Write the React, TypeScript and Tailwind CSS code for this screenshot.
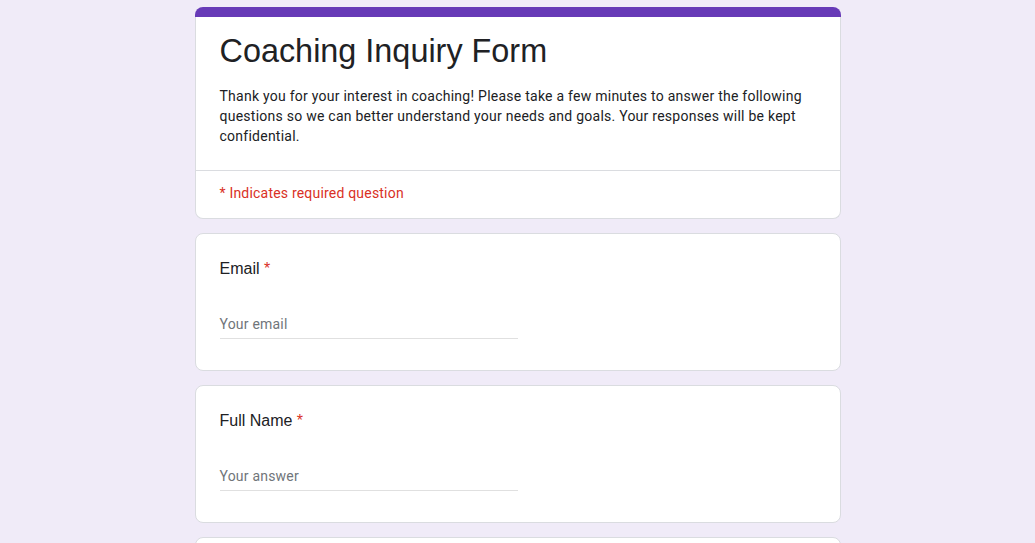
import React from 'react';

const arial = { fontFamily: '"Liberation Sans", Arial, sans-serif' };

const QuestionCard = ({ label, placeholder }: { label: string; placeholder: string }) => (
  <div className="bg-white border border-[#dadce0] rounded-lg px-6 pt-[23px] pb-[31px]">
    <div className="text-[16px] leading-6 text-[#202124]" style={arial}>
      {label} <span className="text-[#d93025]">*</span>
    </div>
    <div className="mt-[33px] w-1/2 border-b border-[#e0e0e0] pb-[4px]">
      <div className="text-[14px] leading-5 text-[#70757a] tracking-[0.2px]">{placeholder}</div>
    </div>
  </div>
);

export default function App() {
  return (
    <div
      className="min-h-screen bg-[#f0ebf8] flex justify-center"
      style={{ fontFamily: 'Roboto, "Liberation Sans", Arial, sans-serif' }}
    >
      <div className="w-[646px] pt-[7px] flex flex-col gap-[14px]">
        <div className="flex flex-col">
          <div className="h-[10px] bg-[#673ab7] rounded-t-lg" />
          <div className="bg-white border border-t-0 border-[#dadce0] rounded-b-lg">
            <div className="px-6 pt-[14px] pb-[24px] border-b border-[#dadce0]">
              <h1 className="text-[32.4px] leading-10 text-[#202124]" style={arial}>
                Coaching Inquiry Form
              </h1>
              <p className="mt-[15px] text-[14px] leading-5 text-[#202124] tracking-[0.25px]">
                Thank you for your interest in coaching! Please take a few minutes to answer the following
                questions so we can better understand your needs and goals. Your responses will be kept
                confidential.
              </p>
            </div>
            <div className="px-6 pt-[12px] pb-[15px] text-[14px] leading-5 text-[#d93025] tracking-[0.2px]">
              * Indicates required question
            </div>
          </div>
        </div>
        <QuestionCard label="Email" placeholder="Your email" />
        <QuestionCard label="Full Name" placeholder="Your answer" />
        <div className="h-[40px] bg-white border border-[#dadce0] rounded-t-lg" />
      </div>
    </div>
  );
}
